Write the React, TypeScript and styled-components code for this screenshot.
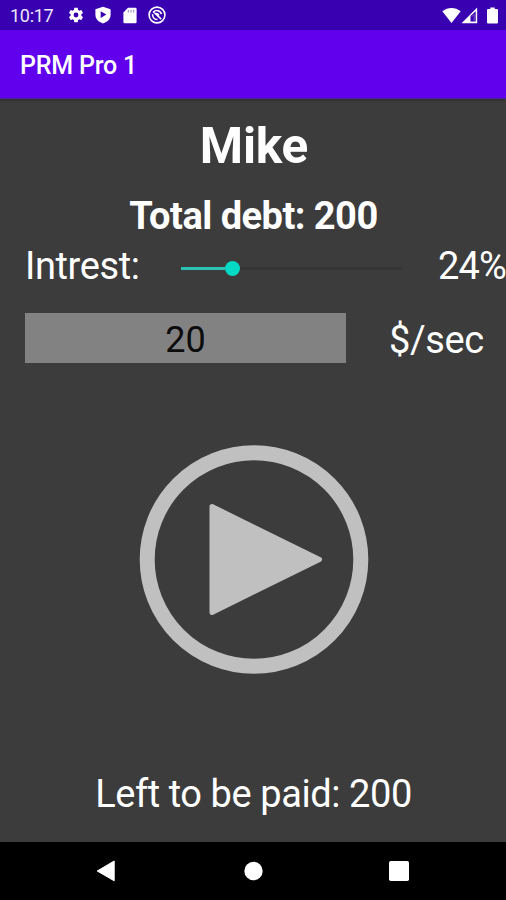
import React from 'react';
import styled, { createGlobalStyle } from 'styled-components';

const GlobalStyle = createGlobalStyle`
  * { box-sizing: border-box; }
  body { margin: 0; background: #3c3c3c; }
`;

const Screen = styled.div`
  width: 506px;
  height: 900px;
  display: flex;
  flex-direction: column;
  overflow: hidden;
  background: #3c3c3c;
  color: #fff;
  font-family: Roboto, sans-serif;
  white-space: nowrap;
`;

const StatusBar = styled.header`
  height: 30px;
  flex: none;
  display: flex;
  align-items: center;
  justify-content: space-between;
  padding: 0 8px 0 10px;
  background: #3900b1;
`;

const StatusGroup = styled.div`
  display: flex;
  align-items: center;
  gap: 9px;
  svg { display: block; }
`;

const SignalGroup = styled.div`
  display: flex;
  align-items: center;
`;

const Clock = styled.span`
  width: 48px;
  font-size: 18px;
  line-height: 28px;
  letter-spacing: -0.3px;
  color: #ece6fa;
  padding-top: 2px;
`;

const AppBar = styled.div`
  height: 69px;
  flex: none;
  display: flex;
  align-items: center;
  padding: 4px 20px 0;
  background: #6100ed;
  border-bottom: 1px solid #4c23a0;
  box-shadow: 0 1px 3px rgba(0, 0, 0, 0.35);
`;

const AppTitle = styled.h1`
  margin: 0;
  font-size: 25px;
  font-weight: 500;
  line-height: 32px;
  letter-spacing: -0.2px;
`;

const Content = styled.main`
  flex: 1;
  display: flex;
  flex-direction: column;
  padding-top: 18px;
`;

const Name = styled.h2`
  margin: 0 0 18px;
  padding-left: 2px;
  font-size: 49.5px;
  line-height: 58px;
  height: 58px;
  font-weight: 700;
  letter-spacing: -0.2px;
  text-align: center;
`;

const Total = styled.div`
  font-size: 38px;
  line-height: 47px;
  height: 45px;
  padding-left: 1px;
  font-weight: 700;
  letter-spacing: -0.52px;
  text-align: center;
  margin-bottom: 4px;
`;

const InterestRow = styled.div`
  display: grid;
  grid-template-columns: 156px 221px 36px auto;
  align-items: center;
  height: 45px;
  padding-left: 25px;
`;

const Label = styled.span`
  font-size: 38px;
  line-height: 45px;
  padding-top: 2px;
  letter-spacing: -0.4px;
`;

const Percent = styled(Label)`
  grid-column: 4;
  letter-spacing: -0.9px;
`;

const Unit = styled(Label)`
  padding-top: 5px;
`;

const Slider = styled.div`
  display: flex;
  align-items: center;
  height: 16px;
  margin-top: 5px;
`;

const SliderFill = styled.div`
  width: 44px;
  height: 3px;
  background: #2cc3b4;
`;

const SliderThumb = styled.div`
  width: 15px;
  height: 15px;
  border-radius: 50%;
  background: #03dac5;
`;

const SliderRest = styled.div`
  flex: 1;
  height: 3px;
  background: #343434;
`;

const RateRow = styled.div`
  display: flex;
  align-items: center;
  height: 50px;
  margin-top: 26px;
  padding-left: 25px;
  gap: 43px;
`;

const RateField = styled.div`
  width: 321px;
  height: 50px;
  background: #828282;
  color: #0c0c0c;
  font-size: 36px;
  line-height: 55px;
  text-align: center;
`;

const PlayButton = styled.button`
  align-self: center;
  width: 230px;
  height: 230px;
  margin: 82px 0 0 1px;
  padding: 0;
  border: 0;
  background: none;
  svg { display: block; }
`;

const Remaining = styled.div`
  margin-top: 97px;
  padding-left: 1px;
  font-size: 38px;
  line-height: 45px;
  letter-spacing: -0.42px;
  text-align: center;
`;

const NavBar = styled.nav`
  flex: none;
  height: 58px;
  display: flex;
  align-items: center;
  justify-content: space-between;
  padding: 0 97px 0 96px;
  background: #000;
  svg { display: block; }
`;

const GearIcon = () => (
  <svg width="18" height="18" viewBox="0 0 24 24" fill="#fff">
    <path d="M19.14 12.94c.04-.3.06-.61.06-.94s-.02-.64-.07-.94l2.03-1.58a.5.5 0 0 0 .12-.61l-1.92-3.32a.49.49 0 0 0-.59-.22l-2.39.96a7 7 0 0 0-1.62-.94l-.36-2.54a.48.48 0 0 0-.48-.41h-3.84a.47.47 0 0 0-.47.41l-.36 2.54c-.59.24-1.13.57-1.62.94l-2.39-.96a.48.48 0 0 0-.59.22L2.74 8.87a.47.47 0 0 0 .12.61l2.03 1.58a6 6 0 0 0-.02 1.88l-2.03 1.58a.5.5 0 0 0-.12.61l1.92 3.32c.12.22.37.29.59.22l2.39-.96c.5.38 1.03.7 1.62.94l.36 2.54c.05.24.24.41.48.41h3.84c.24 0 .44-.17.47-.41l.36-2.54a7 7 0 0 0 1.62-.94l2.39.96c.22.08.47 0 .59-.22l1.92-3.32a.47.47 0 0 0-.12-.61zM12 15.2a3.2 3.2 0 1 1 0-6.4 3.2 3.2 0 0 1 0 6.4z" />
  </svg>
);

const ShieldIcon = () => (
  <svg width="18" height="18" viewBox="0 0 18 18">
    <path d="M9 .7 16.6 3.3V8.8C16.6 13 13.4 16.1 9 17.4 4.6 16.1 1.4 13 1.4 8.8V3.3Z" fill="#fff" />
    <path d="M6.7 5.3V12L12.4 8.6Z" fill="#3900b1" />
  </svg>
);

const CardIcon = () => (
  <svg width="18" height="17" viewBox="-2 0 18 17">
    <path d="M5 .8H12.3Q13.6.8 13.6 2.1V14.9Q13.6 16.2 12.3 16.2H1.7Q.4 16.2.4 14.9V5.4Z" fill="#fff" />
    <path d="M5.3 3V5.5M8 3V5.5M10.7 3V5.5" stroke="#9a80d8" strokeWidth="1" />
  </svg>
);

const SyncOffIcon = () => (
  <svg width="18" height="18" viewBox="0 0 18 18" fill="none" stroke="#fff" strokeWidth="1.6">
    <circle cx="9" cy="9" r="7.9" />
    <path d="M5.3 6.3A4.6 4.6 0 0 1 13.4 8.2M4.6 8.2A4.5 4.5 0 0 0 9.5 13.5M5 5.5 13.2 13.2M7.6 8.2A1.8 1.8 0 0 1 10.7 9.4" />
  </svg>
);

const WifiIcon = () => (
  <svg width="19" height="17" viewBox="0 0 19 17">
    <path d="M.3 4.3C5.5-.2 13.5-.2 18.7 4.3L9.5 16Z" fill="#fff" />
  </svg>
);

const SignalIcon = () => (
  <svg width="17" height="17" viewBox="0 0 17 17">
    <path d="M.5 16.3 16.2.6V16.3Z" fill="#fff" />
    <path d="M9.5 8.9 14.7 4.2V14.6H9.5Z" fill="#3900b1" />
    <path d="M10.6 9.8 13.2 7.4V13.7" fill="none" stroke="#7d59cd" strokeWidth="1" />
  </svg>
);

const BatteryIcon = () => (
  <svg width="11" height="17" viewBox="0 0 10 17" preserveAspectRatio="none">
    <path d="M3 .4H7V2H9Q10 2 10 3V15.6Q10 16.6 9 16.6H1Q0 16.6 0 15.6V3Q0 2 1 2H3Z" fill="#fff" />
  </svg>
);

export default function App() {
  return (
    <>
      <GlobalStyle />
      <Screen>
        <StatusBar>
          <StatusGroup>
            <Clock>10:17</Clock>
            <GearIcon />
            <ShieldIcon />
            <CardIcon />
            <SyncOffIcon />
          </StatusGroup>
          <StatusGroup>
            <SignalGroup>
              <WifiIcon />
              <SignalIcon />
            </SignalGroup>
            <BatteryIcon />
          </StatusGroup>
        </StatusBar>
        <AppBar>
          <AppTitle>PRM Pro 1</AppTitle>
        </AppBar>
        <Content>
          <Name>Mike</Name>
          <Total>Total debt: 200</Total>
          <InterestRow>
            <Label>Intrest:</Label>
            <Slider>
              <SliderFill />
              <SliderThumb />
              <SliderRest />
            </Slider>
            <Percent>24%</Percent>
          </InterestRow>
          <RateRow>
            <RateField>20</RateField>
            <Unit>$/sec</Unit>
          </RateRow>
          <PlayButton aria-label="Play">
            <svg width="230" height="230" viewBox="0 0 230 230">
              <circle cx="115" cy="114.5" r="106.8" fill="none" stroke="#c0c0c0" strokeWidth="15" />
              <path d="M73 61.5 180.5 114.5 73 167.5Z" fill="#c0c0c0" stroke="#c0c0c0" strokeWidth="5" strokeLinejoin="round" />
            </svg>
          </PlayButton>
          <Remaining>Left to be paid: 200</Remaining>
        </Content>
        <NavBar>
          <svg width="20" height="22" viewBox="0 0 20 22">
            <path d="M18.2 1V20.8L1.2 11Z" fill="#fff" stroke="#fff" strokeLinejoin="round" />
          </svg>
          <svg width="20" height="20" viewBox="0 0 20 20">
            <circle cx="10.5" cy="10" r="9.2" fill="#fff" />
          </svg>
          <svg width="20" height="20" viewBox="0 0 20 20">
            <rect width="20" height="20" rx="1.8" fill="#fff" />
          </svg>
        </NavBar>
      </Screen>
    </>
  );
}
